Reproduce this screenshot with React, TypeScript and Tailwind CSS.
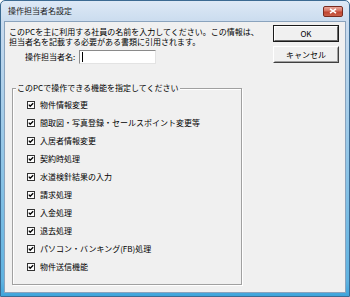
import React from "react";

const items = [
  "物件情報変更",
  "間取図・写真登録・セールスポイント変更等",
  "入居者情報変更",
  "契約時処理",
  "水道検針結果の入力",
  "請求処理",
  "入金処理",
  "退去処理",
  "パソコン・バンキング(FB)処理",
  "物件送信機能",
];

function Check() {
  return (
    <svg width="8" height="8" viewBox="0 0 8 8" className="shrink-0">
      <rect x="0.5" y="0.5" width="7" height="7" fill="#fff" stroke="#333" />
      <path d="M1.8 3.6 L3.2 5.2 L6.2 2.2" fill="none" stroke="#000" strokeWidth="1.3" />
    </svg>
  );
}

export default function App() {
  return (
    <div
      className="w-[350px] h-[297px] flex flex-col border border-[#3b6a92] rounded-t-[5px] bg-[linear-gradient(180deg,#dde9f6_0px,#c9dbee_22px,#5fb2e0_280px,#3aa3da_297px)] text-[8px] text-[#000]"
      style={{ fontFamily: '"Noto Sans CJK JP", "Noto Sans", sans-serif' }}
    >
      <div className="h-[20px] flex items-center pl-[7px] pr-[6px]">
        <span className="text-[8px] text-[#1a1a1a] leading-none">操作担当者名設定</span>
        <div className="ml-auto w-[20px] h-[11px] rounded-[2px] border border-[#7a2b1f] bg-[linear-gradient(180deg,#e9a79a_0%,#d4705f_45%,#c0432e_55%,#c9604a_100%)] flex items-center justify-center">
          <svg width="8" height="6" viewBox="0 0 8 6">
            <path d="M1 0.8 L7 5.2 M7 0.8 L1 5.2" stroke="#fff" strokeWidth="1.6" />
          </svg>
        </div>
      </div>
      <div className="flex-1 mx-[3px] mb-[3px] bg-[#f0f0f0] border border-[#8aa3bd] flex">
        <div className="flex-1 flex flex-col pl-[4px] pt-[5px]">
          <div className="leading-[10px] whitespace-nowrap">
            このPCを主に利用する社員の名前を入力してください。この情報は、
            <br />
            担当者名を記載する必要がある書類に引用されます。
          </div>
          <div className="flex items-center mt-[3px] ml-[16px]">
            <span className="leading-[10px] whitespace-nowrap">操作担当者名:</span>
            <div className="ml-[4px] w-[77px] h-[14px] bg-white border border-[#8a8a8a] border-r-[#e3e3e3] border-b-[#e3e3e3] flex items-center pl-[2px]">
              <div className="w-px h-[10px] bg-black" />
            </div>
          </div>
          <div className="relative mt-[24px] ml-[3px] w-[230px] h-[197px] border border-[#a0a0a0] shadow-[inset_1px_1px_0_#fff,1px_1px_0_#fff] pt-[7px] pl-[14px]">
            <span className="absolute left-[3px] top-[-6px] px-[1px] bg-[#f0f0f0] leading-[10px] whitespace-nowrap">
              このPCで操作できる機能を指定してください
            </span>
            <div className="flex flex-col">
              {items.map((t) => (
                <div key={t} className="h-[18px] flex items-center gap-[5px]">
                  <Check />
                  <span className="leading-[10px] whitespace-nowrap">{t}</span>
                </div>
              ))}
            </div>
          </div>
        </div>
        <div className="w-[66px] mr-[6px] pt-[3px] flex flex-col gap-[4px]">
          <div className="h-[17px] border border-[#1a1a1a] bg-[#f0f0f0] flex">
            <div className="flex-1 border border-t-white border-l-white border-r-[#696969] border-b-[#696969] flex items-center justify-center leading-none">
              OK
            </div>
          </div>
          <div className="h-[17px] border border-t-white border-l-white border-r-[#404040] border-b-[#404040] bg-[#f0f0f0] flex">
            <div className="flex-1 border border-t-[#f0f0f0] border-l-[#f0f0f0] border-r-[#a0a0a0] border-b-[#a0a0a0] flex items-center justify-center leading-none">
              キャンセル
            </div>
          </div>
        </div>
      </div>
    </div>
  );
}
